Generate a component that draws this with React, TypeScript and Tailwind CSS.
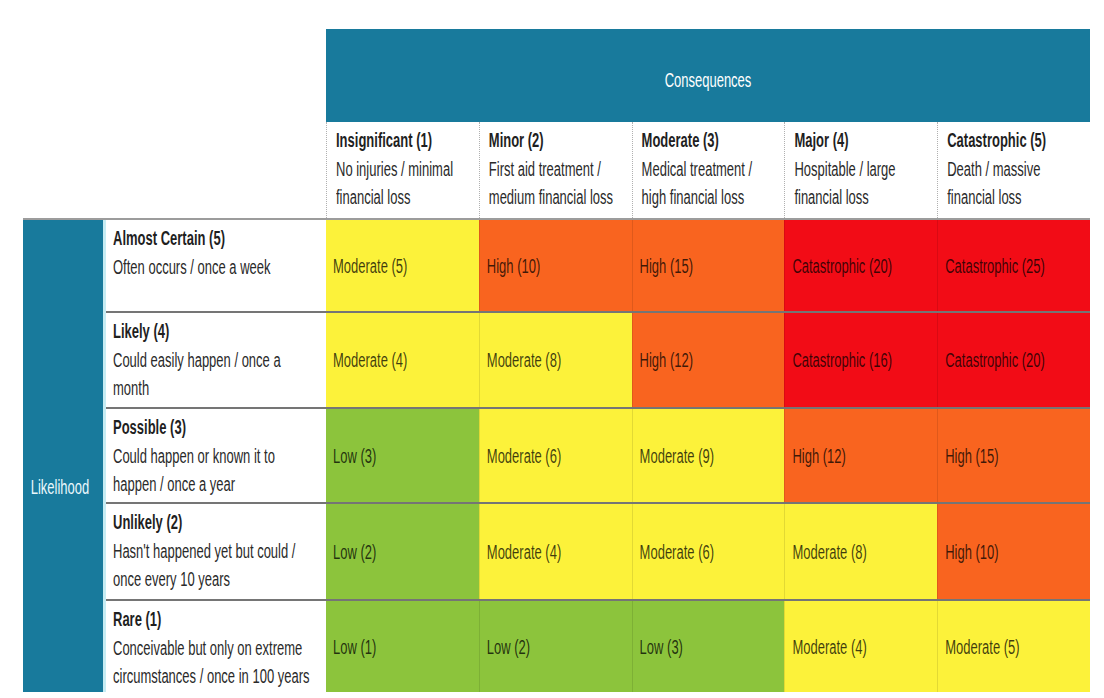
import React from "react";

type Level = "low" | "mod" | "high" | "cat";

const levelBg: Record<Level, string> = {
  low: "bg-[#8cc43c]",
  mod: "bg-[#fcf23a]",
  high: "bg-[#f9641f]",
  cat: "bg-[#f20c16]",
};

const consequences = [
  { title: "Insignificant (1)", lines: ["No injuries / minimal", "financial loss"] },
  { title: "Minor (2)", lines: ["First aid treatment /", "medium financial loss"] },
  { title: "Moderate (3)", lines: ["Medical treatment /", "high financial loss"] },
  { title: "Major (4)", lines: ["Hospitable / large", "financial loss"] },
  { title: "Catastrophic (5)", lines: ["Death / massive", "financial loss"] },
];

const rows: {
  title: string;
  lines: string[];
  height: string;
  cells: [string, Level][];
}[] = [
  {
    title: "Almost Certain (5)",
    lines: ["Often occurs / once a week"],
    height: "h-[91px]",
    cells: [
      ["Moderate (5)", "mod"],
      ["High (10)", "high"],
      ["High (15)", "high"],
      ["Catastrophic (20)", "cat"],
      ["Catastrophic (25)", "cat"],
    ],
  },
  {
    title: "Likely (4)",
    lines: ["Could easily happen / once a", "month"],
    height: "h-[96px]",
    cells: [
      ["Moderate (4)", "mod"],
      ["Moderate (8)", "mod"],
      ["High (12)", "high"],
      ["Catastrophic (16)", "cat"],
      ["Catastrophic (20)", "cat"],
    ],
  },
  {
    title: "Possible (3)",
    lines: ["Could happen or known it to", "happen / once a year"],
    height: "h-[95px]",
    cells: [
      ["Low (3)", "low"],
      ["Moderate (6)", "mod"],
      ["Moderate (9)", "mod"],
      ["High (12)", "high"],
      ["High (15)", "high"],
    ],
  },
  {
    title: "Unlikely (2)",
    lines: ["Hasn't happened yet but could /", "once every 10 years"],
    height: "h-[97px]",
    cells: [
      ["Low (2)", "low"],
      ["Moderate (4)", "mod"],
      ["Moderate (6)", "mod"],
      ["Moderate (8)", "mod"],
      ["High (10)", "high"],
    ],
  },
  {
    title: "Rare (1)",
    lines: ["Conceivable but only on extreme", "circumstances / once in 100 years"],
    height: "h-[93px]",
    cells: [
      ["Low (1)", "low"],
      ["Low (2)", "low"],
      ["Low (3)", "low"],
      ["Moderate (4)", "mod"],
      ["Moderate (5)", "mod"],
    ],
  },
];

// the source image is tall and narrow, so text is stretched vertically
const TextBlock = ({ title, lines }: { title: string; lines: string[] }) => (
  <div className="origin-top-left scale-y-160 text-[13px] leading-[18px] text-[#2a2a2a]">
    <div className="font-bold text-[#1f1f1f]">{title}</div>
    {lines.map((l) => (
      <div key={l} className="whitespace-nowrap">
        {l}
      </div>
    ))}
  </div>
);

const App = () => {
  return (
    <div className="min-h-screen bg-white pt-[29px] pl-[23px] font-['Liberation_Sans',Arial,sans-serif]">
      <div className="w-[1067px]">
        {/* header */}
        <div className="flex">
          <div className="w-[303px] shrink-0" />
          <div className="flex-1">
            <div className="h-[93px] bg-[#187a9c] flex items-center justify-center">
              <div className="scale-y-160 text-[13px] text-white pt-[6px]">Consequences</div>
            </div>
            <div className="h-[96px] grid grid-cols-5">
              {consequences.map((c) => (
                <div key={c.title} className="border-l border-dotted border-[#b0b0b0] pl-[9px] pt-[4px]">
                  <TextBlock title={c.title} lines={c.lines} />
                </div>
              ))}
            </div>
          </div>
        </div>
        <div className="h-[2px] bg-[#9c9c9c]" />

        {/* body */}
        <div className="flex">
          <div className="w-[80px] shrink-0 bg-[#187a9c] flex items-center justify-center pt-[62px] pr-[6px]">
            <div className="scale-y-160 text-[13px] text-[#eaf8fc]">Likelihood</div>
          </div>
          <div className="w-[3px] shrink-0 bg-[#c6ecf3]" />
          <div className="flex-1">
            {rows.map((r, i) => (
              <div
                key={r.title}
                className={`flex ${r.height} ${i > 0 ? "border-t-2 border-[#3a3a3a]/70" : ""}`}
              >
                <div className="w-[220px] shrink-0 bg-white pl-[7px] pt-[4px]">
                  <TextBlock title={r.title} lines={r.lines} />
                </div>
                <div className="flex-1 grid grid-cols-5">
                  {r.cells.map(([label, lvl], j) => (
                    <div
                      key={j}
                      className={`${levelBg[lvl]} flex items-center pl-[7px] ${j > 0 ? "border-l border-black/10" : ""}`}
                    >
                      <div className="scale-y-160 text-[13px] text-black/75 whitespace-nowrap">{label}</div>
                    </div>
                  ))}
                </div>
              </div>
            ))}
          </div>
        </div>
      </div>
    </div>
  );
};

export default App;
